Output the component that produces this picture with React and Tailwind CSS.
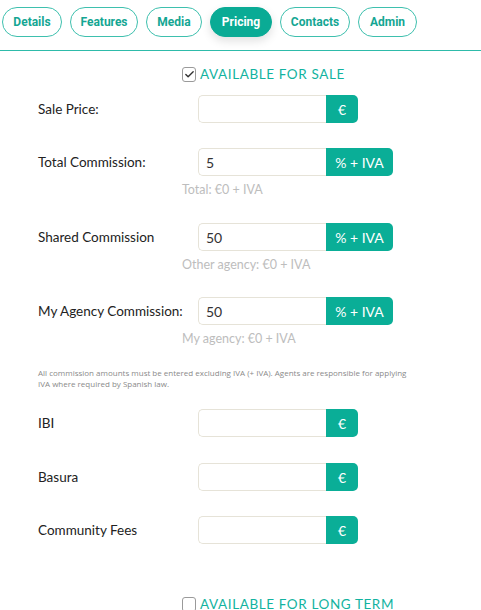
import { Check } from 'lucide-react';

const TABS = [
    { name: 'Details', w: 'w-[60px]' },
    { name: 'Features', w: 'w-[68px]' },
    { name: 'Media', w: 'w-[56px]' },
    { name: 'Pricing', w: 'w-[62px]', active: true },
    { name: 'Contacts', w: 'w-[70px]' },
    { name: 'Admin', w: 'w-[59px]' },
];

const Field = ({ label, value, addon, helper, className }) => (
    <div className={className}>
        <div className="flex items-center">
            <div className="w-[160px] text-[13.5px] text-[#222]">{label}</div>
            <div className="flex h-[28px]">
                <input
                    defaultValue={value}
                    className="w-[128px] h-full rounded-l-[5px] border border-r-0 border-[#e6e3d8] px-[7px] text-[14px] text-[#333] outline-none"
                />
                <span
                    className={`flex items-center justify-center h-full rounded-r-[5px] bg-[#0aae97] text-white text-[14px] ${addon === '€' ? 'w-[32px]' : 'w-[67px]'}`}
                >
                    {addon}
                </span>
            </div>
        </div>
        {helper && (
            <div className="ml-[144px] mt-[6px] text-[12.5px] leading-4 text-[#bdbdbd]">{helper}</div>
        )}
    </div>
);

const Toggle = ({ checked, label, className }) => (
    <div className={`flex items-center ml-[144px] gap-[4px] ${className}`}>
        <span className="flex items-center justify-center w-[14px] h-[15px] rounded-[3px] border border-[#9a9a9a] bg-white">
            {checked && <Check size={11} strokeWidth={3} className="text-[#333]" />}
        </span>
        <span className="text-[13.5px] tracking-[0.6px] text-[#12b3a0] leading-4">{label}</span>
    </div>
);

export default function App() {
    return (
        <div className="w-[481px] h-[610px] overflow-hidden bg-white font-['Lato',sans-serif]">
            <div className="flex gap-[8px] pl-[2px] pt-[7px] pb-[13px] border-b-[1.5px] border-[#2ebbaa]">
                {TABS.map(t => (
                    <button
                        key={t.name}
                        className={`${t.w} h-[30px] rounded-full text-[12px] font-bold font-['Roboto',sans-serif] ${t.active ? 'bg-[#0aab95] text-white shadow-[0_4px_10px_rgba(0,0,0,0.12)] border border-[#0aab95]' : 'border border-[#3ec0ae] text-[#14a693]'}`}
                    >
                        {t.name}
                    </button>
                ))}
            </div>

            <div className="pl-[38px]">
                <Toggle checked label="AVAILABLE FOR SALE" className="mt-[15px]" />

                <Field label="Sale Price:" addon="€" className="mt-[13px]" />
                <Field label="Total Commission:" value="5" addon="% + IVA" helper="Total: €0 + IVA" className="mt-[25px]" />
                <Field label="Shared Commission" value="50" addon="% + IVA" helper="Other agency: €0 + IVA" className="mt-[25px]" />
                <Field label="My Agency Commission:" value="50" addon="% + IVA" helper="My agency: €0 + IVA" className="mt-[24px]" />

                <p className="mt-[20px] whitespace-nowrap text-[8px] leading-[11px] text-[#8a8a8a] font-['Open_Sans',sans-serif]">
                    All commission amounts must be entered excluding IVA (+ IVA). Agents are responsible for applying
                    <br />
                    IVA where required by Spanish law.
                </p>

                <Field label="IBI" addon="€" className="mt-[20px]" />
                <Field label="Basura" addon="€" className="mt-[26px]" />
                <Field label="Community Fees" addon="€" className="mt-[25px]" />

                <Toggle label="AVAILABLE FOR LONG TERM" className="mt-[52px]" />
            </div>
        </div>
    );
}
